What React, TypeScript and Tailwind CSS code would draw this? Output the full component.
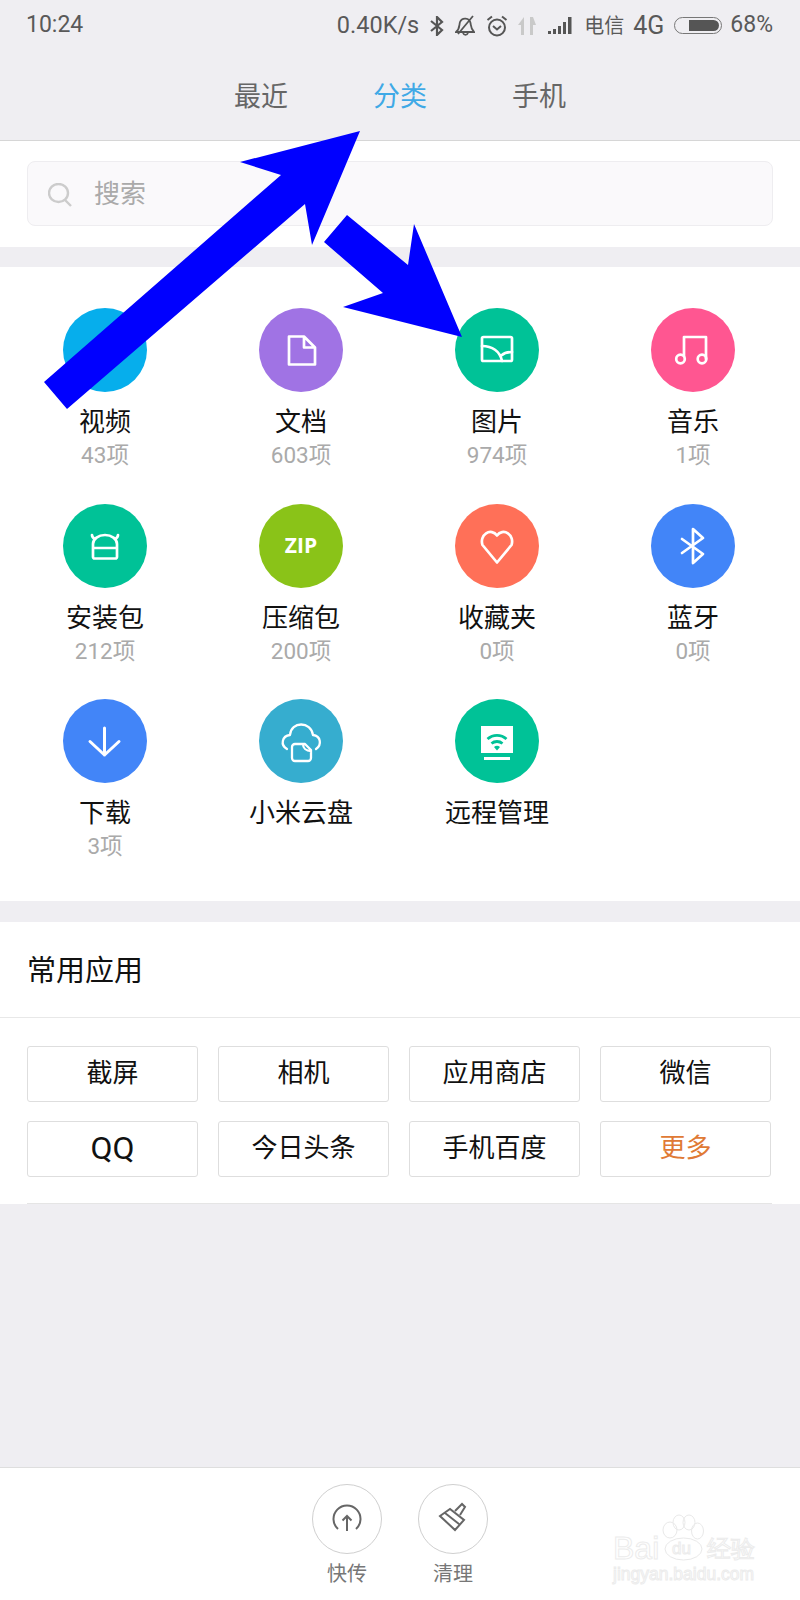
import type { ReactNode } from "react";

const sans = "font-['Roboto','Noto_Sans_CJK_SC',sans-serif]";

function CircleIcon({ color, children }: { color: string; children?: ReactNode }) {
  return (
    <div className={`h-[84px] w-[84px] rounded-full ${color}`}>
      <svg viewBox="0 0 84 84" className="h-full w-full" fill="none" stroke="#fff" strokeWidth="2.7" strokeLinecap="round" strokeLinejoin="round">
        {children}
      </svg>
    </div>
  );
}

type Category = { label: string; count?: string; color: string; icon?: ReactNode };

const categories: Category[] = [
  { label: "视频", count: "43项", color: "bg-[#06aeec]" },
  {
    label: "文档",
    count: "603项",
    color: "bg-[#a073e4]",
    icon: <path d="M30 28.500h15l11 11v17H30z M45 28.500v11h11" />,
  },
  {
    label: "图片",
    count: "974项",
    color: "bg-[#00c297]",
    icon: (
      <>
        <rect x="27" y="29" width="30" height="24" rx="1.500" />
        <path d="M27 38c10 0 18 5 20 15 M47 47c2-2 6-3 10-3" />
      </>
    ),
  },
  {
    label: "音乐",
    count: "1项",
    color: "bg-[#ff5691]",
    icon: (
      <>
        <circle cx="29.500" cy="51" r="4.300" />
        <circle cx="51" cy="51" r="4.300" />
        <path d="M33 48V29h22v22" />
      </>
    ),
  },
  {
    label: "安装包",
    count: "212项",
    color: "bg-[#00c297]",
    icon: <path d="M30 44v-4a12 9 0 0 1 24 0v13a1.500 1.500 0 0 1-1.500 1.500h-21A1.500 1.500 0 0 1 30 53z M30 44h24 M29 31c0 2 1 3 3 4 M55 31c0 2-1 3-3 4" />,
  },
  { label: "压缩包", count: "200项", color: "bg-[#8ac318]" },
  {
    label: "收藏夹",
    count: "0项",
    color: "bg-[#ff7058]",
    icon: <path d="M42 58.500L27.500 41a8.500 9.500 0 0 1 14.500-9.500A8.500 9.500 0 0 1 56.500 41z" />,
  },
  {
    label: "蓝牙",
    count: "0项",
    color: "bg-[#4285f8]",
    icon: <path d="M31 35l21 15-10 9V25l10 9-21 15" />,
  },
  {
    label: "下载",
    count: "3项",
    color: "bg-[#4285f8]",
    icon: <path d="M41.500 29v27 M27 42.500L41.500 56 56 42.500" strokeWidth="3" />,
  },
  {
    label: "小米云盘",
    color: "bg-[#36adcf]",
    icon: (
      <>
        <path d="M28 50c-7-4-5-13 3-14 1-14 21-14 23 0 8 1 9 10 3 14" strokeWidth="2.300" />
        <path d="M36 45h10l6 6v8a3 3 0 0 1-3 3H36a3 3 0 0 1-3-3V48a3 3 0 0 1 3-3z M44 45c0 4 3 7 8 7" strokeWidth="2.300" />
      </>
    ),
  },
  {
    label: "远程管理",
    color: "bg-[#00c297]",
    icon: (
      <>
        <rect x="26" y="27" width="32" height="27" fill="#fff" stroke="none" />
        <rect x="29" y="58" width="26" height="3" fill="#fff" stroke="none" />
        <path d="M32.500 40a14 14 0 0 1 19 0 M36.500 44.500a8.500 8.500 0 0 1 11 0" stroke="#00c297" strokeWidth="2.800" strokeLinecap="butt" />
        <path d="M39 48a4.500 4.500 0 0 1 6 0l-3 3.500z" fill="#00c297" stroke="none" />
      </>
    ),
  },
];

const apps = ["截屏", "相机", "应用商店", "微信", "今日头条", "手机百度"];

function StatusBar() {
  return (
    <div className="flex h-[50px] items-center pl-[26px] pr-[27px] pt-[1px] text-[23px] text-[#595959]">
      <span>10:24</span>
      <span className="ml-auto text-[23.5px]">0.40K/s</span>
      <svg viewBox="0 0 14 20" className="ml-[11px] h-[20px] w-[14px]" fill="none" stroke="#555" strokeWidth="2.200">
        <path d="M1 5l11 9-5 5V1l5 5L1 15" />
      </svg>
      <svg viewBox="0 0 20 21" className="ml-[11px] h-[21px] w-[20px]" fill="none" stroke="#555" strokeWidth="1.800">
        <path d="M1 17h18c-3-3-3-6-3.500-9a5.500 5.500 0 0 0-10.500-1c-1 3 0 7-4 10z M18 1L3 19 M8 18c1 2.500 4 2.500 5 0" />
      </svg>
      <svg viewBox="0 0 22 22" className="ml-[11px] h-[22px] w-[22px]" fill="none" stroke="#555" strokeWidth="2">
        <circle cx="11" cy="12.500" r="8" />
        <path d="M7 11l4 3.500 4-3.500 M1.500 5L6 1.500 M20.500 5L16 1.500" />
      </svg>
      <svg viewBox="0 0 18 18" className="ml-[10px] h-[18px] w-[18px]" fill="#c9c9c9">
        <path d="M6 0v18H3V8H0z M12 18V0h3l3 8h-3v10z" />
      </svg>
      <svg viewBox="0 0 24 17" className="ml-[12px] h-[17px] w-[24px]" fill="#555">
        <path d="M0 14h3v3H0z M5 12h3v5H5z M10 9h3v8h-3z M15 5h3v12h-3z M20 0h3.500v17H20z" />
      </svg>
      <span className="ml-[12px] text-[20px]">电信</span>
      <span className="ml-[9px] text-[25px]">4G</span>
      <div className="ml-[10px] flex h-[17px] w-[48px] items-center justify-end rounded-full border border-[#777] pr-[2px]">
        <div className="h-[11px] w-[30px] rounded-l-[2px] rounded-r-full bg-[#555]" />
      </div>
      <span className="ml-[8px]">68%</span>
    </div>
  );
}

function Header() {
  return (
    <header className="h-[141px] border-b border-[#d6d6d6] bg-[#efeef2]">
      <StatusBar />
      <nav className="flex h-[90px] items-center justify-center gap-[85px] pt-[5px] text-[27px] text-[#666]">
        <span>最近</span>
        <span className="text-[#3fa9e6]">分类</span>
        <span>手机</span>
      </nav>
    </header>
  );
}

function SearchBar() {
  return (
    <section className="h-[106px] bg-white px-[27px] pt-[20px]">
      <div className="flex h-[65px] items-center rounded-[8px] border border-[#eeedf0] bg-[#faf9fb] pl-[20px] pt-[2px] text-[26px] text-[#aaa]">
        <svg viewBox="0 0 24 24" className="h-[24px] w-[24px]" fill="none" stroke="#ccc" strokeWidth="2.400">
          <ellipse cx="10.500" cy="10" rx="9.500" ry="9" />
          <path d="M17 17l6 6" />
        </svg>
        <span className="ml-[22px]">搜索</span>
      </div>
    </section>
  );
}

function CategoryGrid() {
  return (
    <section className="mt-[20px] grid h-[634px] auto-rows-[195.5px] grid-cols-4 bg-white pl-[7px] pr-[9px] pt-[41px]">
      {categories.map((c) => (
        <div key={c.label} className="flex flex-col items-center">
          {c.label === "压缩包" ? (
            <div className={`flex h-[84px] w-[84px] items-center justify-center rounded-full font-['Open_Sans',sans-serif] text-[21px] font-bold text-white ${c.color}`}>
              ZIP
            </div>
          ) : (
            <CircleIcon color={c.color}>{c.icon}</CircleIcon>
          )}
          <span className="mt-[12px] text-[26px] leading-[36px] text-[#111]">{c.label}</span>
          {c.count && <span className="text-[22.5px] leading-[30px] text-[#aaa]">{c.count}</span>}
        </div>
      ))}
    </section>
  );
}

function AppButton({ className, children }: { className: string; children: ReactNode }) {
  return (
    <div className={`flex h-[56px] items-center justify-center rounded-[3px] border border-[#dedede] pb-[2px] ${className}`}>
      {children}
    </div>
  );
}

function CommonApps() {
  return (
    <section className="mt-[21px] h-[282px] bg-white">
      <h2 className="flex h-[96px] items-center border-b border-[#e8e8e8] pl-[27px] pt-[5px] text-[29px] font-normal text-[#111]">常用应用</h2>
      <div className="ml-[27px] mr-[28px] grid h-[186px] grid-cols-4 content-start gap-x-[20px] gap-y-[19px] border-b border-[#e5e5e5] pr-[1px] pt-[28px]">
        {apps.slice(0, 4).map((name) => (
          <AppButton key={name} className="text-[26px] text-[#111]">{name}</AppButton>
        ))}
        <AppButton className="text-[32px] text-[#111]">QQ</AppButton>
        {apps.slice(4).map((name) => (
          <AppButton key={name} className="text-[26px] text-[#111]">{name}</AppButton>
        ))}
        <AppButton className="text-[26px] text-[#e07a35]">更多</AppButton>
      </div>
    </section>
  );
}

function Footer() {
  return (
    <footer className="mt-auto flex h-[133px] justify-center gap-[36px] border-t border-[#dedede] bg-white pt-[16px]">
      <div className="flex w-[70px] flex-col items-center">
        <svg viewBox="0 0 70 70" className="h-[70px] w-[70px]" fill="none" stroke="#666" strokeWidth="2">
          <circle cx="35" cy="35" r="34.500" stroke="#cfcfcf" strokeWidth="1" />
          <path d="M26 45a13.500 13.500 0 1 1 18 0 M35 47V32 M30.500 36.500L35 32l4.500 4.500" />
        </svg>
        <span className="mt-[6px] text-[20px] leading-[28px] text-[#777]">快传</span>
      </div>
      <div className="flex w-[70px] flex-col items-center">
        <svg viewBox="0 0 70 70" className="h-[70px] w-[70px]" fill="none" stroke="#666" strokeWidth="2">
          <circle cx="35" cy="35" r="34.500" stroke="#cfcfcf" strokeWidth="1" />
          <path d="M22 32l10-7 14 11-9 10z M27 29l14 11 M37 27l7-7 3 3-5 8" />
        </svg>
        <span className="mt-[6px] text-[20px] leading-[28px] text-[#777]">清理</span>
      </div>
    </footer>
  );
}

function Watermark() {
  return (
    <div className="absolute left-[613px] top-[1510px] h-[80px] w-[145px] font-['Liberation_Sans',sans-serif] text-transparent [-webkit-text-stroke:1px_#ececec]">
      <svg viewBox="0 0 145 55" className="absolute left-0 top-0 h-[55px] w-[145px]" fill="none" stroke="#e9e9e9">
        <ellipse cx="70.500" cy="39" rx="18.500" ry="11" />
        <ellipse cx="57" cy="20" rx="7" ry="8" />
        <ellipse cx="66" cy="12.500" rx="6" ry="7.500" />
        <ellipse cx="76" cy="12.500" rx="6" ry="7.500" />
        <ellipse cx="84.500" cy="21" rx="6" ry="8" />
      </svg>
      <span className="absolute left-0 top-[20px] text-[32px] leading-[36px]">Bai</span>
      <span className="absolute left-[59px] top-[29px] text-[17px] leading-[20px]">du</span>
      <span className="absolute left-[94px] top-[25px] text-[24px] leading-[28px]">经验</span>
      <span className="absolute left-0 top-[54px] whitespace-nowrap text-[17.500px] leading-[20px]">jingyan.baidu.com</span>
    </div>
  );
}

function Arrows() {
  return (
    <svg viewBox="0 0 800 1600" className="pointer-events-none absolute left-0 top-0 h-[1600px] w-[800px]" fill="#0000ff">
      <polygon points="44,382 281,175 240,162 360,131 312,245 305,204 67,409" />
      <polygon points="347,215 324,242 383,293 343,307 462,337 414,224 408,265" />
    </svg>
  );
}

export default function App() {
  return (
    <div className={`relative flex h-[1600px] w-[800px] flex-col overflow-hidden bg-[#efeef2] ${sans}`}>
      <Header />
      <SearchBar />
      <CategoryGrid />
      <CommonApps />
      <Footer />
      <Watermark />
      <Arrows />
    </div>
  );
}
